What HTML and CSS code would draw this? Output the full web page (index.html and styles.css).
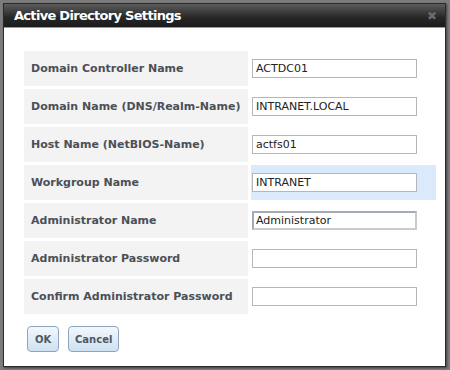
FILE: index.html
```html
<!DOCTYPE html>
<html lang="en">
<head>
    <meta charset="UTF-8">
    <title>Active Directory Settings</title>
    <link rel="stylesheet" href="styles.css">
</head>
<body>
    <div class="dialog">
        <div class="titlebar">
            <span class="title">Active Directory Settings</span>
            <span class="close">&#x2716;</span>
        </div>

        <div class="content">
            <div class="form-grid">
                <div class="label">Domain Controller Name</div>
                <div class="field"><input class="text" type="text" value="ACTDC01"></div>

                <div class="label">Domain Name (DNS/Realm-Name)</div>
                <div class="field"><input class="text" type="text" value="INTRANET.LOCAL"></div>

                <div class="label">Host Name (NetBIOS-Name)</div>
                <div class="field"><input class="text" type="text" value="actfs01"></div>

                <div class="label">Workgroup Name</div>
                <div class="field hover"><input class="text" type="text" value="INTRANET"></div>

                <div class="label">Administrator Name</div>
                <div class="field"><input class="text focus" type="text" value="Administrator"></div>

                <div class="label">Administrator Password</div>
                <div class="field"><input class="text" type="password" value=""></div>

                <div class="label">Confirm Administrator Password</div>
                <div class="field"><input class="text" type="password" value=""></div>
            </div>

            <div class="buttons">
                <button class="btn">OK</button>
                <button class="btn">Cancel</button>
            </div>
        </div>
    </div>
</body>
</html>
```

FILE: styles.css
```css
* {
    margin: 0;
    padding: 0;
    box-sizing: border-box;
}

body {
    background-color: #7c7c7c;
    font-family: 'DejaVu Sans', Verdana, sans-serif;
    width: 450px;
    height: 370px;
    padding: 3px 4px 3px 3px;
}

.dialog {
    width: 443px;
    height: 364px;
    border: 1px solid #2b2b2b;
    background-color: #fff;
    box-shadow: 1px 1px 2px rgba(0, 0, 0, 0.5);
    display: flex;
    flex-direction: column;
}

.titlebar {
    height: 24px;
    background: linear-gradient(#5c5c5c, #262626 60%, #1b1b1b);
    border-bottom: 1px solid #9a9a9a;
    display: flex;
    align-items: center;
    justify-content: space-between;
    padding: 0 8px 0 10px;
}

.title {
    color: #fff;
    font-weight: bold;
    font-size: 13px;
    letter-spacing: -0.7px;
}

.close {
    color: #6b7886;
    font-size: 12px;
    opacity: 0.85;
}

.content {
    padding: 23px 0 0 20px;
}

.form-grid {
    display: grid;
    grid-template-columns: 224px 185px;
    grid-auto-rows: 35px;
    gap: 3px;
}

.label {
    background-color: #f3f3f3;
    color: #4b5058;
    font-weight: bold;
    font-size: 11px;
    padding-left: 7px;
    display: flex;
    align-items: center;
    white-space: nowrap;
}

.field {
    display: flex;
    align-items: center;
    padding-left: 1px;
}

.field.hover {
    background-color: #dbeafb;
}

.text {
    width: 165px;
    height: 19px;
    border: 1px solid #b3b6ba;
    background: #fff;
    padding: 0 3px;
    font-family: 'DejaVu Sans', Verdana, sans-serif;
    font-size: 11px;
    color: #222;
    outline: none;
}

.text.focus {
    border: 2px solid #a3acb6;
    border-right-color: #c6ccd2;
    border-bottom-color: #c6ccd2;
    padding: 0 2px;
}

.buttons {
    display: flex;
    gap: 9px;
    margin-top: 12px;
    padding-left: 3px;
}

.btn {
    height: 26px;
    min-width: 32px;
    padding: 0 6px;
    border: 1px solid #8ea6bd;
    border-radius: 4px;
    background: linear-gradient(#f2f7fc, #cfe1f2);
    color: #4d5863;
    font-family: 'DejaVu Sans', Verdana, sans-serif;
    font-weight: bold;
    font-size: 10px;
    cursor: pointer;
}
```
